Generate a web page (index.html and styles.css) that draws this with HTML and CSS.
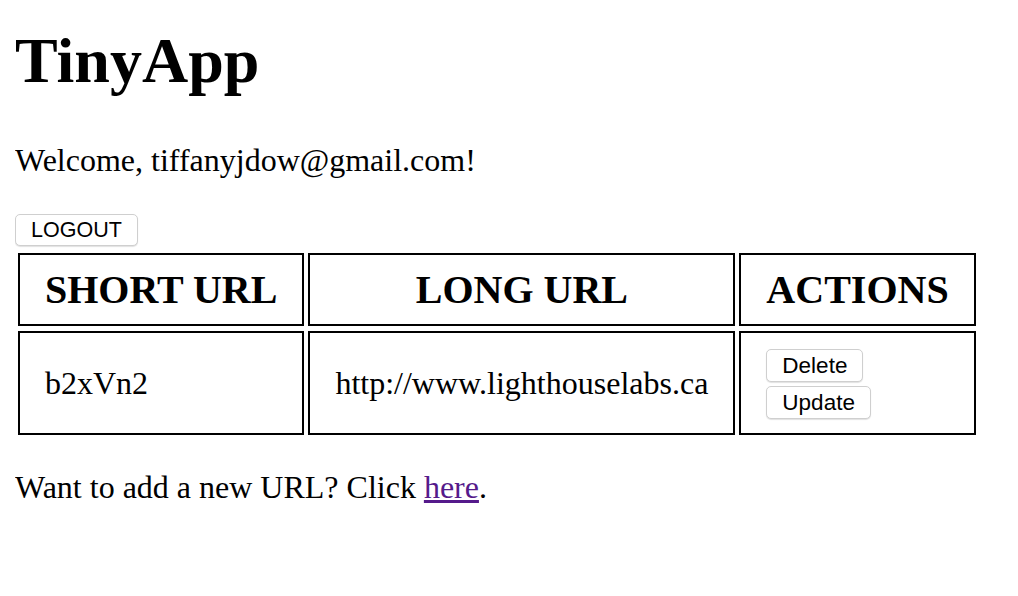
FILE: index.html
```html
<!DOCTYPE html>
<html>
<head>
<meta charset="utf-8">
<title>TinyApp</title>
<link rel="stylesheet" href="styles.css">
</head>
<body>
<h1 class="title">TinyApp</h1>
<p class="welcome">Welcome, tiffanyjdow@gmail.com!</p>
<form class="logout-form">
  <button type="button" class="btn btn-logout">LOGOUT</button>
</form>
<table class="urls">
  <thead>
    <tr>
      <th>SHORT URL</th>
      <th>LONG URL</th>
      <th>ACTIONS</th>
    </tr>
  </thead>
  <tbody>
    <tr>
      <td>b2xVn2</td>
      <td>http://www.lighthouselabs.ca</td>
      <td class="actions">
        <div class="action-stack">
          <button type="button" class="btn">Delete</button>
          <button type="button" class="btn">Update</button>
        </div>
      </td>
    </tr>
  </tbody>
</table>
<p class="footer">Want to add a new URL? Click <a href="#" class="link">here</a>.</p>
</body>
</html>
```

FILE: styles.css
```css
html, body {
  background: #ffffff;
}
body {
  margin: 0 15px;
  font-family: "Liberation Serif", "Times New Roman", serif;
  font-size: 32px;
  color: #000000;
}
.title {
  font-size: 64px;
  font-weight: bold;
  margin: 24px 0 44px;
}
.welcome {
  margin: 0 0 35px;
}
.logout-form {
  display: flex;
  margin: 0 0 2px;
}
.btn {
  font-family: "Liberation Sans", Arial, sans-serif;
  font-size: 22.5px;
  color: #000000;
  background: #ffffff;
  border: 1px solid #cfcfcf;
  border-radius: 5px;
  box-shadow: 0 1px 1px rgba(0, 0, 0, 0.12);
  height: 33px;
  padding: 0 15px;
  line-height: 31px;
}
.btn-logout {
  font-size: 21.5px;
  height: 32px;
  line-height: 30px;
}
.urls {
  border-collapse: separate;
  border-spacing: 4px 5px;
  margin-left: -1px;
}
.urls th, .urls td {
  border: 2px solid #000000;
  padding: 11px 25px;
}
.urls th {
  font-size: 40px;
  font-weight: bold;
  text-align: center;
}
.urls td {
  text-align: left;
  vertical-align: middle;
}
.urls td.actions {
  padding: 16px 25px 14px 25px;
}
.action-stack {
  display: flex;
  flex-direction: column;
  align-items: flex-start;
  gap: 4px;
}
.footer {
  margin: 29px 0 0;
}
.link {
  color: #551a8b;
  text-decoration: underline;
}
```
